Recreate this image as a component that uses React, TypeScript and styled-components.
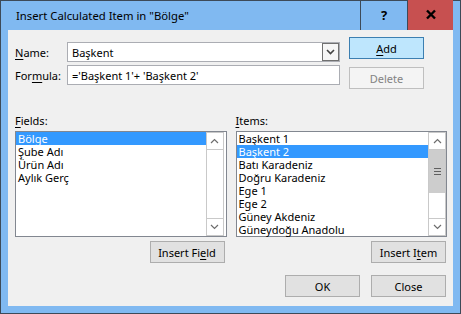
import styled, { createGlobalStyle } from 'styled-components';

const GlobalStyle = createGlobalStyle`
  * { box-sizing: border-box; }
  html, body { margin: 0; padding: 0; background: #80b9f1; }
  body {
    font-family: 'Noto Sans', 'Open Sans', sans-serif;
    font-size: 11px;
    color: #000;
  }
`;

const fields = ['Bölge', 'Şube Adı', 'Ürün Adı', 'Aylık Gerç'];
const items = [
  'Başkent 1',
  'Başkent 2',
  'Batı Karadeniz',
  'Doğru Karadeniz',
  'Ege 1',
  'Ege 2',
  'Güney Akdeniz',
  'Güneydoğu Anadolu',
];

const Chevron = ({ up }: { up?: boolean }) => (
  <svg width='9' height='6' viewBox='0 0 9 6'>
    <path
      d={up ? 'M1 5 L4.5 1.5 L8 5' : 'M1 1 L4.5 4.5 L8 1'}
      fill='none'
      stroke='#6d6d6d'
      strokeWidth='1.2'
    />
  </svg>
);

const ScrollBar = ({ thumb }: { thumb?: boolean }) => (
  <Scroll>
    <ArrowBox>
      <Chevron up />
    </ArrowBox>
    <Track>
      {thumb && (
        <Thumb>
          <Grip />
          <Grip />
          <Grip />
        </Thumb>
      )}
    </Track>
    <ArrowBox $bottom>
      <Chevron />
    </ArrowBox>
  </Scroll>
);

const App = () => {
  return (
    <>
      <GlobalStyle />
      <Window>
        <TitleBar>
          <Title>Insert Calculated Item in "Bölge"</Title>
          <CaptionButton>?</CaptionButton>
          <CaptionButton $close>
            <svg width='12' height='11' viewBox='0 0 12 11'>
              <path d='M2 1.5 L10 9.5 M10 1.5 L2 9.5' stroke='#000' strokeWidth='2.4' />
            </svg>
          </CaptionButton>
        </TitleBar>
        <Body>
          <TopSection>
            <FormFields>
              <FieldRow>
                <FieldLabel>
                  <u>N</u>ame:
                </FieldLabel>
                <Combo>
                  <InputText>Başkent</InputText>
                  <DropButton>
                    <svg width='9' height='6' viewBox='0 0 9 6'>
                      <path d='M1 1 L4.5 4.5 L8 1' fill='none' stroke='#444' strokeWidth='1.6' />
                    </svg>
                  </DropButton>
                </Combo>
              </FieldRow>
              <FieldRow>
                <FieldLabel>
                  For<u>m</u>ula:
                </FieldLabel>
                <TextBox>
                  <InputText>='Başkent 1'+ 'Başkent 2'</InputText>
                </TextBox>
              </FieldRow>
            </FormFields>
            <SideButtons>
              <Button $kind='default'>
                <u>A</u>dd
              </Button>
              <Button $kind='disabled'>Delete</Button>
            </SideButtons>
          </TopSection>
          <ListSection>
            <ListColumn>
              <ColumnLabel>
                <u>F</u>ields:
              </ColumnLabel>
              <ListBox $gap>
                <Rows>
                  {fields.map((f, i) => (
                    <Row key={f} $selected={i === 0}>
                      {f}
                    </Row>
                  ))}
                </Rows>
                <ScrollBar />
              </ListBox>
              <ColumnFooter $pad={2}>
                <Button>
                  Insert Fi<u>e</u>ld
                </Button>
              </ColumnFooter>
            </ListColumn>
            <ListColumn>
              <ColumnLabel>
                <u>I</u>tems:
              </ColumnLabel>
              <ListBox>
                <Rows>
                  {items.map((f, i) => (
                    <Row key={f} $selected={i === 1}>
                      {f}
                    </Row>
                  ))}
                </Rows>
                <ScrollBar thumb />
              </ListBox>
              <ColumnFooter $pad={1}>
                <Button>
                  Insert I<u>t</u>em
                </Button>
              </ColumnFooter>
            </ListColumn>
          </ListSection>
          <Footer>
            <Button>OK</Button>
            <Button>Close</Button>
          </Footer>
        </Body>
      </Window>
    </>
  );
};

export default App;

const Window = styled.div`
  width: 461px;
  height: 314px;
  border: 1px solid #3d4a58;
  background-color: #80b9f1;
  padding: 0 7px 7px 7px;
  display: flex;
  flex-direction: column;
`;

const TitleBar = styled.div`
  height: 30px;
  display: flex;
  align-items: flex-start;
  margin-top: -1px;
`;

const Title = styled.div`
  flex: 1;
  padding-left: 8px;
  line-height: 31px;
  font-size: 11.3px;
`;

const CaptionButton = styled.div<{ $close?: boolean }>`
  width: ${({ $close }) => ($close ? '46px' : '47px')};
  height: 31px;
  display: flex;
  align-items: center;
  justify-content: center;
  border-left: 1px solid #3d4a58;
  border-bottom: 1px solid #3d4a58;
  background-color: ${({ $close }) => ($close ? '#c75050' : 'transparent')};
  font-weight: 700;
  font-size: 13px;
  padding-bottom: 1px;
`;

const Body = styled.div`
  flex: 1;
  background-color: #f0f0f0;
  padding: 7px 6px 8px 7px;
  display: flex;
  flex-direction: column;
`;

const TopSection = styled.div`
  display: flex;
  height: 52px;
`;

const FormFields = styled.div`
  width: 325px;
  margin-top: 5px;
  display: flex;
  flex-direction: column;
  gap: 3px;
`;

const FieldRow = styled.div`
  display: flex;
  align-items: center;
`;

const FieldLabel = styled.div`
  width: 52px;
  u { text-underline-offset: 2px; }
`;

const TextBox = styled.div`
  flex: 1;
  height: 20px;
  background-color: #fff;
  border: 1px solid #abadb3;
  display: flex;
  align-items: center;
`;

const Combo = styled(TextBox)`
  justify-content: space-between;
`;

const InputText = styled.span`
  padding-left: 4px;
  white-space: nowrap;
`;

const DropButton = styled.div`
  width: 17px;
  height: 18px;
  border: 1px solid #707070;
  background-color: #f6f6f6;
  display: flex;
  align-items: center;
  justify-content: center;
`;

const SideButtons = styled.div`
  margin-left: 9px;
  display: flex;
  flex-direction: column;
  gap: 8px;
`;

const Button = styled.div<{ $kind?: 'default' | 'disabled' }>`
  width: 75px;
  height: 22px;
  display: flex;
  align-items: center;
  justify-content: center;
  border: 1px solid
    ${({ $kind }) =>
      $kind === 'default' ? '#3c7fb1' : $kind === 'disabled' ? '#bfbfbf' : '#adadad'};
  background-color: ${({ $kind }) =>
    $kind === 'default' ? '#bee6fd' : $kind === 'disabled' ? '#f4f4f4' : '#e1e1e1'};
  color: ${({ $kind }) => ($kind === 'disabled' ? '#838383' : '#000')};
  white-space: nowrap;
  u { text-underline-offset: 2px; }
`;

const ListSection = styled.div`
  margin-top: 24px;
  display: flex;
  gap: 9px;
`;

const ListColumn = styled.div`
  flex: 1;
  display: flex;
  flex-direction: column;
`;

const ColumnLabel = styled.div`
  height: 18px;
  line-height: 16px;
  u { text-underline-offset: 2px; }
`;

const ListBox = styled.div<{ $gap?: boolean }>`
  height: 106px;
  background-color: #fff;
  border: 1px solid #828790;
  display: flex;
  padding-right: ${({ $gap }) => ($gap ? '2px' : '0')};
`;

const Rows = styled.div`
  flex: 1;
  display: flex;
  flex-direction: column;
`;

const Row = styled.div<{ $selected?: boolean }>`
  height: 13px;
  line-height: 13px;
  padding-left: 2px;
  white-space: nowrap;
  background-color: ${({ $selected }) => ($selected ? '#3399ff' : 'transparent')};
  color: ${({ $selected }) => ($selected ? '#fff' : '#000')};
`;

const Scroll = styled.div`
  width: 18px;
  border: 1px solid #c9c9c9;
  display: flex;
  flex-direction: column;
  background-color: #fff;
`;

const ArrowBox = styled.div<{ $bottom?: boolean }>`
  height: 17px;
  display: flex;
  align-items: center;
  justify-content: center;
  border-top: ${({ $bottom }) => ($bottom ? '1px solid #c9c9c9' : 'none')};
  border-bottom: ${({ $bottom }) => ($bottom ? 'none' : '1px solid #c9c9c9')};
`;

const Track = styled.div`
  flex: 1;
  display: flex;
  flex-direction: column;
`;

const Thumb = styled.div`
  height: 43px;
  background-color: #cdcdcd;
  display: flex;
  flex-direction: column;
  align-items: center;
  justify-content: center;
  gap: 2px;
`;

const Grip = styled.div`
  width: 7px;
  height: 1px;
  background-color: #5f5f5f;
`;

const ColumnFooter = styled.div<{ $pad: number }>`
  margin-top: 4px;
  display: flex;
  justify-content: flex-end;
  padding-right: ${({ $pad }) => $pad}px;
`;

const Footer = styled.div`
  margin-top: 12px;
  display: flex;
  justify-content: flex-end;
  gap: 11px;
  padding-right: 1px;
`;
